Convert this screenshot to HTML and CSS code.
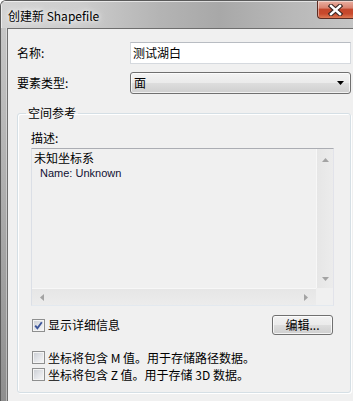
FILE: index.html
```html
<!DOCTYPE html>
<html lang="zh-CN">
<head>
<meta charset="utf-8">
<title>创建新 Shapefile</title>
<link rel="stylesheet" href="styles.css">
</head>
<body>
<div class="window">
  <div class="titlebar">
    <span class="title">创建新 Shapefile</span>
    <div class="close" aria-label="关闭">
      <svg width="15" height="12" viewBox="0 0 15 12">
        <path d="M3 2 L12 10 M12 2 L3 10" stroke="#3b2622" stroke-width="4.6" stroke-linecap="square" fill="none"/>
        <path d="M3 2 L12 10 M12 2 L3 10" stroke="#ffffff" stroke-width="2.4" stroke-linecap="square" fill="none"/>
      </svg>
    </div>
  </div>
  <div class="main">
    <div class="frame"></div>
    <div class="client">
      <div class="field">
        <span class="label">名称:</span>
        <div class="text-input">测试湖白</div>
      </div>
      <div class="field">
        <span class="label">要素类型:</span>
        <div class="combo">
          <span>面</span>
          <svg class="combo-arrow" width="7" height="4" viewBox="0 0 7 4"><path d="M0 0 H7 L3.5 4 Z" fill="#000"/></svg>
        </div>
      </div>
      <fieldset class="group">
        <legend>空间参考</legend>
        <div class="desc-label">描述:</div>
        <div class="desc-box">
          <div class="desc-text">
            <div class="desc-title">未知坐标系</div>
            <div class="indent">Name: Unknown</div>
          </div>
          <div class="vscroll">
            <svg width="7" height="4" viewBox="0 0 7 4"><path d="M3.5 0 L7 4 H0 Z" fill="#a3a3a3"/></svg>
            <svg width="7" height="4" viewBox="0 0 7 4"><path d="M0 0 H7 L3.5 4 Z" fill="#a3a3a3"/></svg>
          </div>
          <div class="hscroll">
            <svg width="4" height="7" viewBox="0 0 4 7"><path d="M4 0 V7 L0 3.5 Z" fill="#a3a3a3"/></svg>
            <svg width="4" height="7" viewBox="0 0 4 7"><path d="M0 0 V7 L4 3.5 Z" fill="#a3a3a3"/></svg>
          </div>
          <div class="corner"></div>
        </div>
        <div class="detail-row">
          <div class="check">
            <span class="box">
              <svg width="9" height="9" viewBox="0 0 9 9"><path d="M1.2 4.6 L3.4 7.2 L7.8 1.2" stroke="#3d569a" stroke-width="1.9" fill="none"/></svg>
            </span>
            <span>显示详细信息</span>
          </div>
          <div class="btn">编辑...</div>
        </div>
        <div class="options">
          <div class="check"><span class="box"></span><span>坐标将包含 M 值。用于存储路径数据。</span></div>
          <div class="check"><span class="box"></span><span>坐标将包含 Z 值。用于存储 3D 数据。</span></div>
        </div>
      </fieldset>
    </div>
  </div>
</div>
</body>
</html>
```

FILE: styles.css
```css
* { box-sizing: border-box; }
html, body { margin: 0; padding: 0; }
body {
  width: 353px;
  height: 401px;
  overflow: hidden;
  background: #ffffff;
  font-family: "Noto Sans CJK SC", "Noto Sans", sans-serif;
  font-size: 12px;
  color: #000;
}
.window {
  width: 353px;
  height: 401px;
  display: flex;
  flex-direction: column;
  border: 1px solid #5a5a5a;
  border-right: none;
  border-bottom: none;
  border-radius: 6px 0 0 0;
  overflow: hidden;
  background: #a8a8a8;
}
.titlebar {
  height: 27px;
  display: flex;
  align-items: flex-start;
  background: linear-gradient(90deg, #d3d3d3 0%, #cdcdcd 22%, #b4b4b4 45%, #a8a8a8 62%, #b8b8b8 82%, #c4c4c4 100%);
  box-shadow: inset 1px 1px 0 rgba(255,255,255,0.6);
}
.title {
  margin: 7px 0 0 7px;
  line-height: 16px;
  font-size: 12px;
  color: #000;
  text-shadow: 0 0 8px #ffffff, 0 0 4px rgba(255,255,255,0.9);
}
.close {
  margin-left: auto;
  width: 36px;
  height: 19px;
  margin-top: -1px;
  border: 1px solid #5b2b22;
  border-right: none;
  border-radius: 0 0 0 4px;
  background: linear-gradient(180deg, #e9b0a2 0%, #d98471 40%, #c4472c 50%, #c8492c 75%, #dd7a55 100%);
  box-shadow: inset 1px 1px 0 rgba(255,255,255,0.45);
  display: flex;
  align-items: center;
  justify-content: center;
  padding-top: 1px;
}
.main {
  flex: 1;
  display: flex;
  min-height: 0;
}
.frame {
  width: 6px;
  background: linear-gradient(180deg, #c6c6c6 0%, #b0b0b0 40%, #8e8e8e 100%);
  box-shadow: inset -1px 0 0 rgba(255,255,255,0.35);
}
.client {
  flex: 1;
  background: #f0f0f0;
  border-left: 1px solid #6e6e6e;
  border-top: 1px solid #6e6e6e;
  padding: 13px 0 0 9px;
}
.field {
  display: flex;
  align-items: center;
  height: 22px;
  margin-bottom: 8px;
}
.label {
  width: 113px;
  line-height: 16px;
}
.text-input {
  width: 221px;
  height: 22px;
  background: #ffffff;
  border: 1px solid #d5d9de;
  border-top-color: #b8bcc2;
  padding: 0 0 0 2px;
  line-height: 20px;
}
.combo {
  width: 221px;
  height: 22px;
  border: 1px solid #707070;
  border-radius: 3px;
  background: linear-gradient(180deg, #f3f3f3 0%, #ebebeb 48%, #dddddd 52%, #cfcfcf 100%);
  box-shadow: inset 0 0 0 1px rgba(255,255,255,0.7);
  display: flex;
  align-items: center;
  justify-content: space-between;
  padding: 0 6px 0 3px;
  line-height: 20px;
}
.group {
  margin: 11px 0 0 0;
  width: 334px;
  height: 288px;
  border: 1px solid #d5dfe5;
  border-radius: 3px;
  box-shadow: inset 1px 1px 0 #ffffff, 1px 1px 0 #ffffff;
  padding: 9px 0 0 13px;
  min-width: 0;
}
.group legend {
  padding: 0 2px;
  margin-left: -5px;
  line-height: 16px;
}
.desc-label {
  line-height: 16px;
  margin-bottom: 2px;
}
.desc-box {
  width: 303px;
  height: 158px;
  border: 1px solid;
  border-color: #abadb3 #e2e3ea #e3e9ef #dbdfe6;
  background: #f0f0f0;
  display: grid;
  grid-template-columns: 1fr 17px;
  grid-template-rows: 1fr 17px;
}
.desc-text {
  padding: 1px 0 0 2px;
}
.desc-title {
  line-height: 16px;
}
.indent {
  padding-left: 6px;
  font-family: "Liberation Sans", "Noto Sans", sans-serif;
  font-size: 11px;
  line-height: 14px;
  color: #111133;
}
.vscroll {
  background: linear-gradient(90deg, #e6e6e6 0%, #ececec 100%);
  border-left: 1px solid #f7f7f7;
  display: flex;
  flex-direction: column;
  align-items: center;
  justify-content: space-between;
  padding: 9px 0 7px 0;
}
.hscroll {
  background: linear-gradient(180deg, #e6e6e6 0%, #ececec 100%);
  border-top: 1px solid #f7f7f7;
  display: flex;
  align-items: center;
  justify-content: space-between;
  padding: 0 8px 0 8px;
}
.corner {
  background: #f0f0f0;
}
.detail-row {
  width: 303px;
  display: flex;
  align-items: center;
  justify-content: space-between;
  margin-top: 9px;
  height: 20px;
}
.check {
  display: flex;
  align-items: center;
  gap: 3px;
  padding-left: 1px;
  line-height: 16px;
}
.box {
  width: 13px;
  height: 13px;
  border: 1px solid #8e8f8f;
  background: linear-gradient(135deg, #c9ccd2 0%, #e2e4e8 50%, #f8f8f8 100%);
  box-shadow: inset 0 0 0 1px #f4f4f4;
  display: flex;
  align-items: center;
  justify-content: center;
  flex: none;
}
.btn {
  width: 61px;
  height: 20px;
  margin-right: 1px;
  border: 1px solid #707070;
  border-radius: 3px;
  background: linear-gradient(180deg, #f2f2f2 0%, #ebebeb 48%, #dddddd 52%, #cfcfcf 100%);
  box-shadow: inset 0 0 0 1px rgba(255,255,255,0.75);
  text-align: center;
  line-height: 18px;
}
.options {
  margin-top: 14px;
  display: flex;
  flex-direction: column;
}
.options .check {
  height: 17px;
}
```
